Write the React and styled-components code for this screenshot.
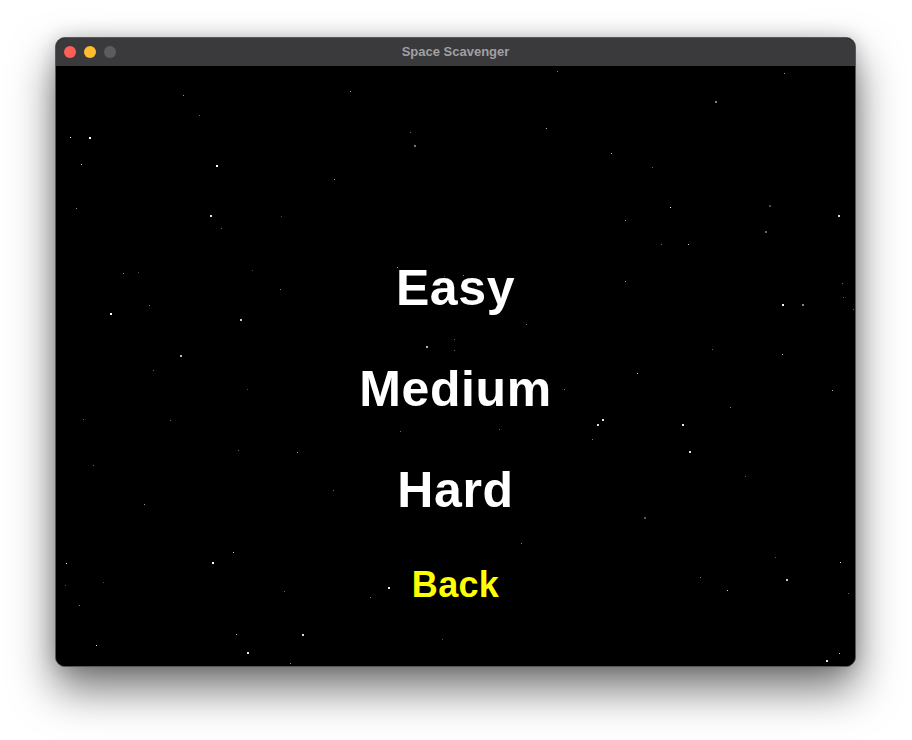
import styled, { createGlobalStyle } from "styled-components";

const GlobalStyle = createGlobalStyle`
  html, body {
    margin: 0;
    padding: 0;
    background: #ffffff;
  }
`;

const Desktop = styled.div`
  width: 912px;
  height: 740px;
  padding: 37px 0 0 55px;
  box-sizing: border-box;
  background: #ffffff;
`;

const Window = styled.div`
  width: 801px;
  box-sizing: border-box;
  border: 1px solid #58585a;
  border-radius: 10px;
  overflow: hidden;
  background: #000;
  box-shadow: 0 22px 44px rgba(0, 0, 0, 0.55), 0 0 18px rgba(0, 0, 0, 0.18);
`;

const TitleBar = styled.div`
  position: relative;
  height: 28px;
  background: #3a3a3d;
  display: flex;
  align-items: center;
  padding-left: 8px;
  gap: 8px;
`;

const Light = styled.span`
  width: 12px;
  height: 12px;
  border-radius: 50%;
  background: ${(p) => p.color};
`;

const Title = styled.div`
  position: absolute;
  left: 0;
  right: 0;
  top: 0;
  line-height: 28px;
  text-align: center;
  font-family: "Liberation Sans", Arial, sans-serif;
  font-weight: 700;
  font-size: 13px;
  color: #a0a0a3;
  pointer-events: none;
`;

const Screen = styled.div`
  position: relative;
  height: 600px;
  background: #000;
`;

const Sky = styled.svg`
  position: absolute;
  inset: 0;
`;

const Menu = styled.div`
  position: relative;
  display: flex;
  flex-direction: column;
  align-items: center;
  padding-top: 172px;
  font-family: "Liberation Sans", Arial, sans-serif;
  font-weight: 700;
`;

const Item = styled.div`
  font-size: ${(p) => (p.small ? 36 : 50)}px;
  line-height: ${(p) => (p.small ? 87 : 101)}px;
  letter-spacing: ${(p) => (p.small ? 0.3 : 0.6)}px;
  color: ${(p) => (p.active ? "#ffff00" : "#ffffff")};
`;

// [x, y, size, brightness] in page coordinates
const stars = [
  [183, 95, 1, 0.6], [199, 115, 1, 0.4], [350, 91, 1, 0.6], [70, 137, 1, 0.9],
  [89, 137, 2, 1], [81, 164, 1, 0.8], [216, 165, 2, 1], [410, 132, 1, 0.4],
  [414, 145, 2, 0.45], [334, 179, 1, 0.6], [76, 208, 1, 0.6], [210, 215, 2, 0.9],
  [281, 216, 1, 0.3], [221, 228, 1, 0.4], [557, 71, 1, 0.5], [784, 73, 1, 0.6],
  [715, 101, 2, 0.5], [546, 128, 1, 0.7], [611, 153, 1, 0.7], [652, 167, 1, 0.4],
  [670, 207, 1, 1], [769, 205, 2, 0.3], [838, 215, 2, 0.85], [625, 220, 1, 0.6],
  [765, 231, 2, 0.4], [661, 244, 1, 0.4], [688, 244, 1, 0.8],
  [123, 273, 1, 0.6], [138, 272, 1, 0.3], [252, 270, 1, 0.3], [280, 289, 1, 0.5],
  [110, 313, 2, 1], [149, 305, 1, 0.5], [240, 319, 2, 0.8], [180, 355, 2, 0.75],
  [153, 370, 1, 0.4], [247, 389, 1, 0.3], [83, 419, 1, 0.4], [170, 420, 1, 0.4],
  [238, 450, 1, 0.4], [297, 452, 1, 0.6], [93, 465, 1, 0.4], [426, 346, 2, 0.7],
  [400, 431, 1, 0.4], [397, 267, 1, 0.6], [444, 276, 1, 0.3], [454, 339, 1, 0.4],
  [454, 350, 1, 0.4], [463, 275, 1, 0.5], [625, 281, 1, 0.6], [526, 324, 1, 0.5],
  [842, 283, 1, 0.4], [843, 297, 1, 0.4], [782, 304, 2, 0.95], [802, 304, 2, 0.5],
  [853, 309, 1, 0.4], [712, 349, 1, 0.4], [782, 354, 1, 0.7], [637, 373, 1, 0.8],
  [564, 389, 1, 0.5], [832, 390, 1, 0.7], [730, 407, 1, 0.5], [602, 419, 2, 0.9],
  [597, 424, 2, 0.85], [682, 424, 2, 0.9], [499, 429, 1, 0.4], [592, 439, 1, 0.5],
  [689, 451, 2, 0.9], [333, 490, 1, 0.4], [144, 504, 1, 0.6], [233, 552, 1, 0.8],
  [212, 562, 2, 1], [66, 563, 1, 0.9], [103, 582, 1, 0.3], [65, 585, 1, 0.3],
  [388, 587, 2, 0.9], [284, 591, 1, 0.4], [370, 597, 1, 0.5], [79, 605, 1, 0.5],
  [236, 634, 1, 0.7], [302, 634, 2, 0.85], [96, 645, 1, 0.9], [247, 652, 2, 0.9],
  [290, 663, 1, 0.6], [442, 639, 1, 0.3], [745, 476, 1, 0.4], [644, 517, 2, 0.35],
  [521, 543, 1, 0.5], [775, 557, 1, 0.35], [840, 562, 1, 0.9], [700, 577, 1, 0.5],
  [786, 579, 2, 0.8], [727, 590, 1, 0.8], [848, 593, 1, 0.4], [839, 653, 1, 0.8],
  [826, 660, 2, 0.9],
];

const Starfield = () => (
  <Sky width="800" height="600" viewBox="0 0 800 600">
    {stars.map(([x, y, s, b], i) => (
      <rect
        key={i}
        x={x - 56}
        y={y - 66}
        width={s}
        height={s}
        fill="#fff"
        fillOpacity={b}
      />
    ))}
  </Sky>
);

const App = () => {
  return (
    <>
      <GlobalStyle />
      <Desktop>
        <Window>
          <TitleBar>
            <Light color="#ff5f57" />
            <Light color="#febc2e" />
            <Light color="#5b5c60" />
            <Title>Space Scavenger</Title>
          </TitleBar>
          <Screen>
            <Starfield />
            <Menu>
              <Item>Easy</Item>
              <Item>Medium</Item>
              <Item>Hard</Item>
              <Item small active>
                Back
              </Item>
            </Menu>
          </Screen>
        </Window>
      </Desktop>
    </>
  );
};

export default App;
